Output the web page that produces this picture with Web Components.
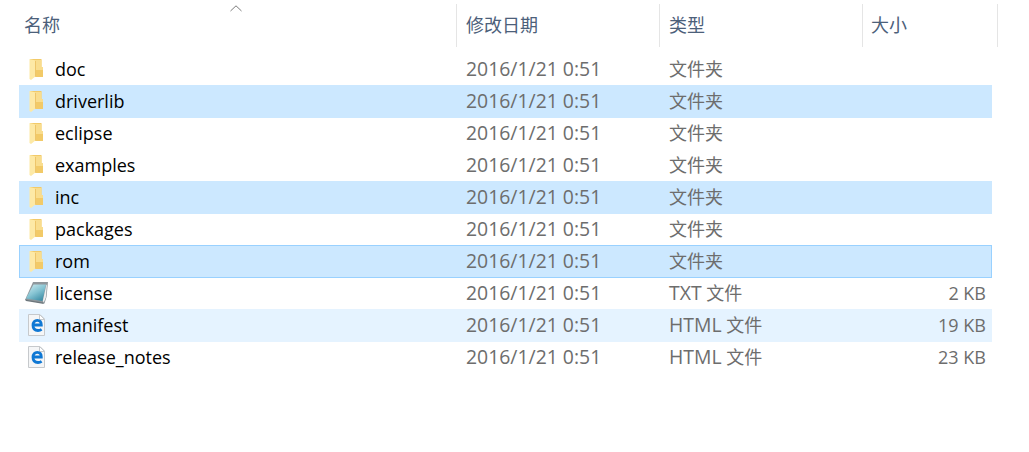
<!DOCTYPE html>
<html>
<head>
<meta charset="utf-8">
<title>file list</title>
<style>
  html, body { margin: 0; background: #fff; }
  body { font-family: "Open Sans", "Noto Sans CJK SC", sans-serif; font-size: 18px; overflow: hidden; }
</style>
</head>
<body>
<file-list>
  <file-header></file-header>
  <file-row name="doc" icon="folder" date="2016/1/21 0:51" kind="文件夹"></file-row>
  <file-row name="driverlib" icon="folder" date="2016/1/21 0:51" kind="文件夹" state="selected"></file-row>
  <file-row name="eclipse" icon="folder" date="2016/1/21 0:51" kind="文件夹"></file-row>
  <file-row name="examples" icon="folder" date="2016/1/21 0:51" kind="文件夹"></file-row>
  <file-row name="inc" icon="folder" date="2016/1/21 0:51" kind="文件夹" state="selected"></file-row>
  <file-row name="packages" icon="folder" date="2016/1/21 0:51" kind="文件夹"></file-row>
  <file-row name="rom" icon="folder" date="2016/1/21 0:51" kind="文件夹" state="focused"></file-row>
  <file-row name="license" icon="txt" date="2016/1/21 0:51" kind="文件" prefix="TXT" size="2 KB"></file-row>
  <file-row name="manifest" icon="html" date="2016/1/21 0:51" kind="文件" prefix="HTML" size="19 KB" state="hover"></file-row>
  <file-row name="release_notes" icon="html" date="2016/1/21 0:51" kind="文件" prefix="HTML" size="23 KB"></file-row>
</file-list>

<script>
const ICONS = {
  folder: `<svg width="15" height="21" viewBox="0 0 15 21">
    <path d="M1 0h11.500v8H14v10H1z" fill="#f2ca68"/>
    <path d="M7 1h5.500v7H14v3H7z" fill="#f9dd8e"/>
    <path d="M.5 0L7 1.500V17L2 21 .5 20z" fill="#fde9a6"/>
    <path d="M6 2h1v15l-1 1z" fill="#eec56a"/>
  </svg>`,
  txt: `<svg width="23" height="22" viewBox="0 0 23 22">
    <defs><linearGradient id="n" x1="0" y1="0" x2=".7" y2="1">
      <stop offset="0" stop-color="#d3eef2"/><stop offset=".55" stop-color="#84c3d2"/><stop offset="1" stop-color="#3e8ea6"/></linearGradient></defs>
    <path d="M8 0h15l-1.500 15-2 6.500L0 18z" fill="#8f979c"/>
    <path d="M8.500 2.500H21L17.500 19 1 16.500z" fill="url(#n)"/>
    <path d="M17.800 19L21.300 3l.7-.5-1.200 13-2 5z" fill="#eef0f1"/>
    <path d="M0 17.500l18 3 1 1.500L1 19z" fill="#6c767c"/>
  </svg>`,
  html: `<svg width="17" height="22" viewBox="0 0 17 22">
    <path d="M.5.500h11.500l4.500 4.500v16.500H.500z" fill="#f5f6f7" stroke="#c6c9cc"/>
    <path d="M11.500.500V5.500h5z" fill="#fff" stroke="#c6c9cc"/>
    <path d="M5.500 11H13.300C13.300 8 11.600 6.300 9.300 6.300 6.700 6.300 5 8.400 5 11.300 5 14.500 7 16.500 10 16.500 11.400 16.500 12.600 16.100 13.600 15.400" fill="none" stroke="#0f78d4" stroke-width="2.800"/>
  </svg>`
};

class FileHeader extends HTMLElement {
  constructor() {
    super();
    this.attachShadow({ mode: 'open' });
  }

  connectedCallback() {
    this.shadowRoot.innerHTML = `
      <style>
        :host {
          display: grid;
          grid-template-columns: 438px 203px 203px 135px;
          width: 979px;
          height: 40px;
          margin: 4px 0 9px 19px;
          color: #4c607a;
          font-size: 18px;
          position: relative;
        }
        .cell {
          border-right: 1px solid #e5e5e5;
          padding-left: 9px;
          line-height: 43px;
        }
        .cell:first-of-type { padding-left: 5px; }
        .cell:last-of-type { padding-left: 8px; }
        svg { position: absolute; left: 211px; top: 1px; }
      </style>
      <div class="cell">名称</div>
      <div class="cell">修改日期</div>
      <div class="cell">类型</div>
      <div class="cell">大小</div>
      <svg width="12" height="7" viewBox="0 0 12 7"><path d="M.5 6L6 .8 11.500 6" fill="none" stroke="#7b7b7b"/></svg>
    `;
  }
}

class FileRow extends HTMLElement {
  constructor() {
    super();
    this.attachShadow({ mode: 'open' });
  }

  connectedCallback() {
    const a = (n) => this.getAttribute(n) || '';
    const icon = a('icon');
    const prefix = a('prefix') ? `<span class="lat">${a('prefix')}</span> ` : '';
    this.shadowRoot.innerHTML = `
      <style>
        /* rows sit 32px apart but their band is 33px tall */
        :host {
          display: grid;
          grid-template-columns: 438px 203px 203px 129px;
          width: 973px;
          height: 33px;
          margin: 0 0 -1px 19px;
          line-height: 32px;
          color: #6d6d6d;
          box-sizing: border-box;
        }
        :host([state="selected"]) { background: #cce8ff; }
        :host([state="hover"]) { background: #e5f3ff; }
        :host([state="focused"]) { background: #cce8ff; outline: 1px solid #99d1ff; outline-offset: -1px; }
        .name { display: flex; align-items: center; height: 32px; color: #000; }
        .icon { display: flex; flex: none; }
        .folder { padding-left: 10px; width: 26px; }
        .txt { padding-left: 6px; width: 30px; }
        .html { padding-left: 9px; width: 27px; }
        .date, .kind { padding-left: 9px; }
        .date { font-size: 19.4px; }
        .lat { font-size: 19.4px; }
        .size { text-align: right; padding-right: 6px; }
        svg { display: block; }
      </style>
      <div class="name"><span class="icon ${icon}">${ICONS[icon]}</span>${a('name')}</div>
      <div class="date">${a('date')}</div>
      <div class="kind">${prefix}${a('kind')}</div>
      <div class="size">${a('size')}</div>
    `;
  }
}

class FileList extends HTMLElement {
  constructor() {
    super();
    this.attachShadow({ mode: 'open' });
  }

  connectedCallback() {
    this.shadowRoot.innerHTML = `
      <style>:host { display: block; width: 1029px; height: 452px; }</style>
      <slot></slot>
    `;
  }
}

customElements.define('file-header', FileHeader);
customElements.define('file-row', FileRow);
customElements.define('file-list', FileList);
</script>
</body>
</html>
